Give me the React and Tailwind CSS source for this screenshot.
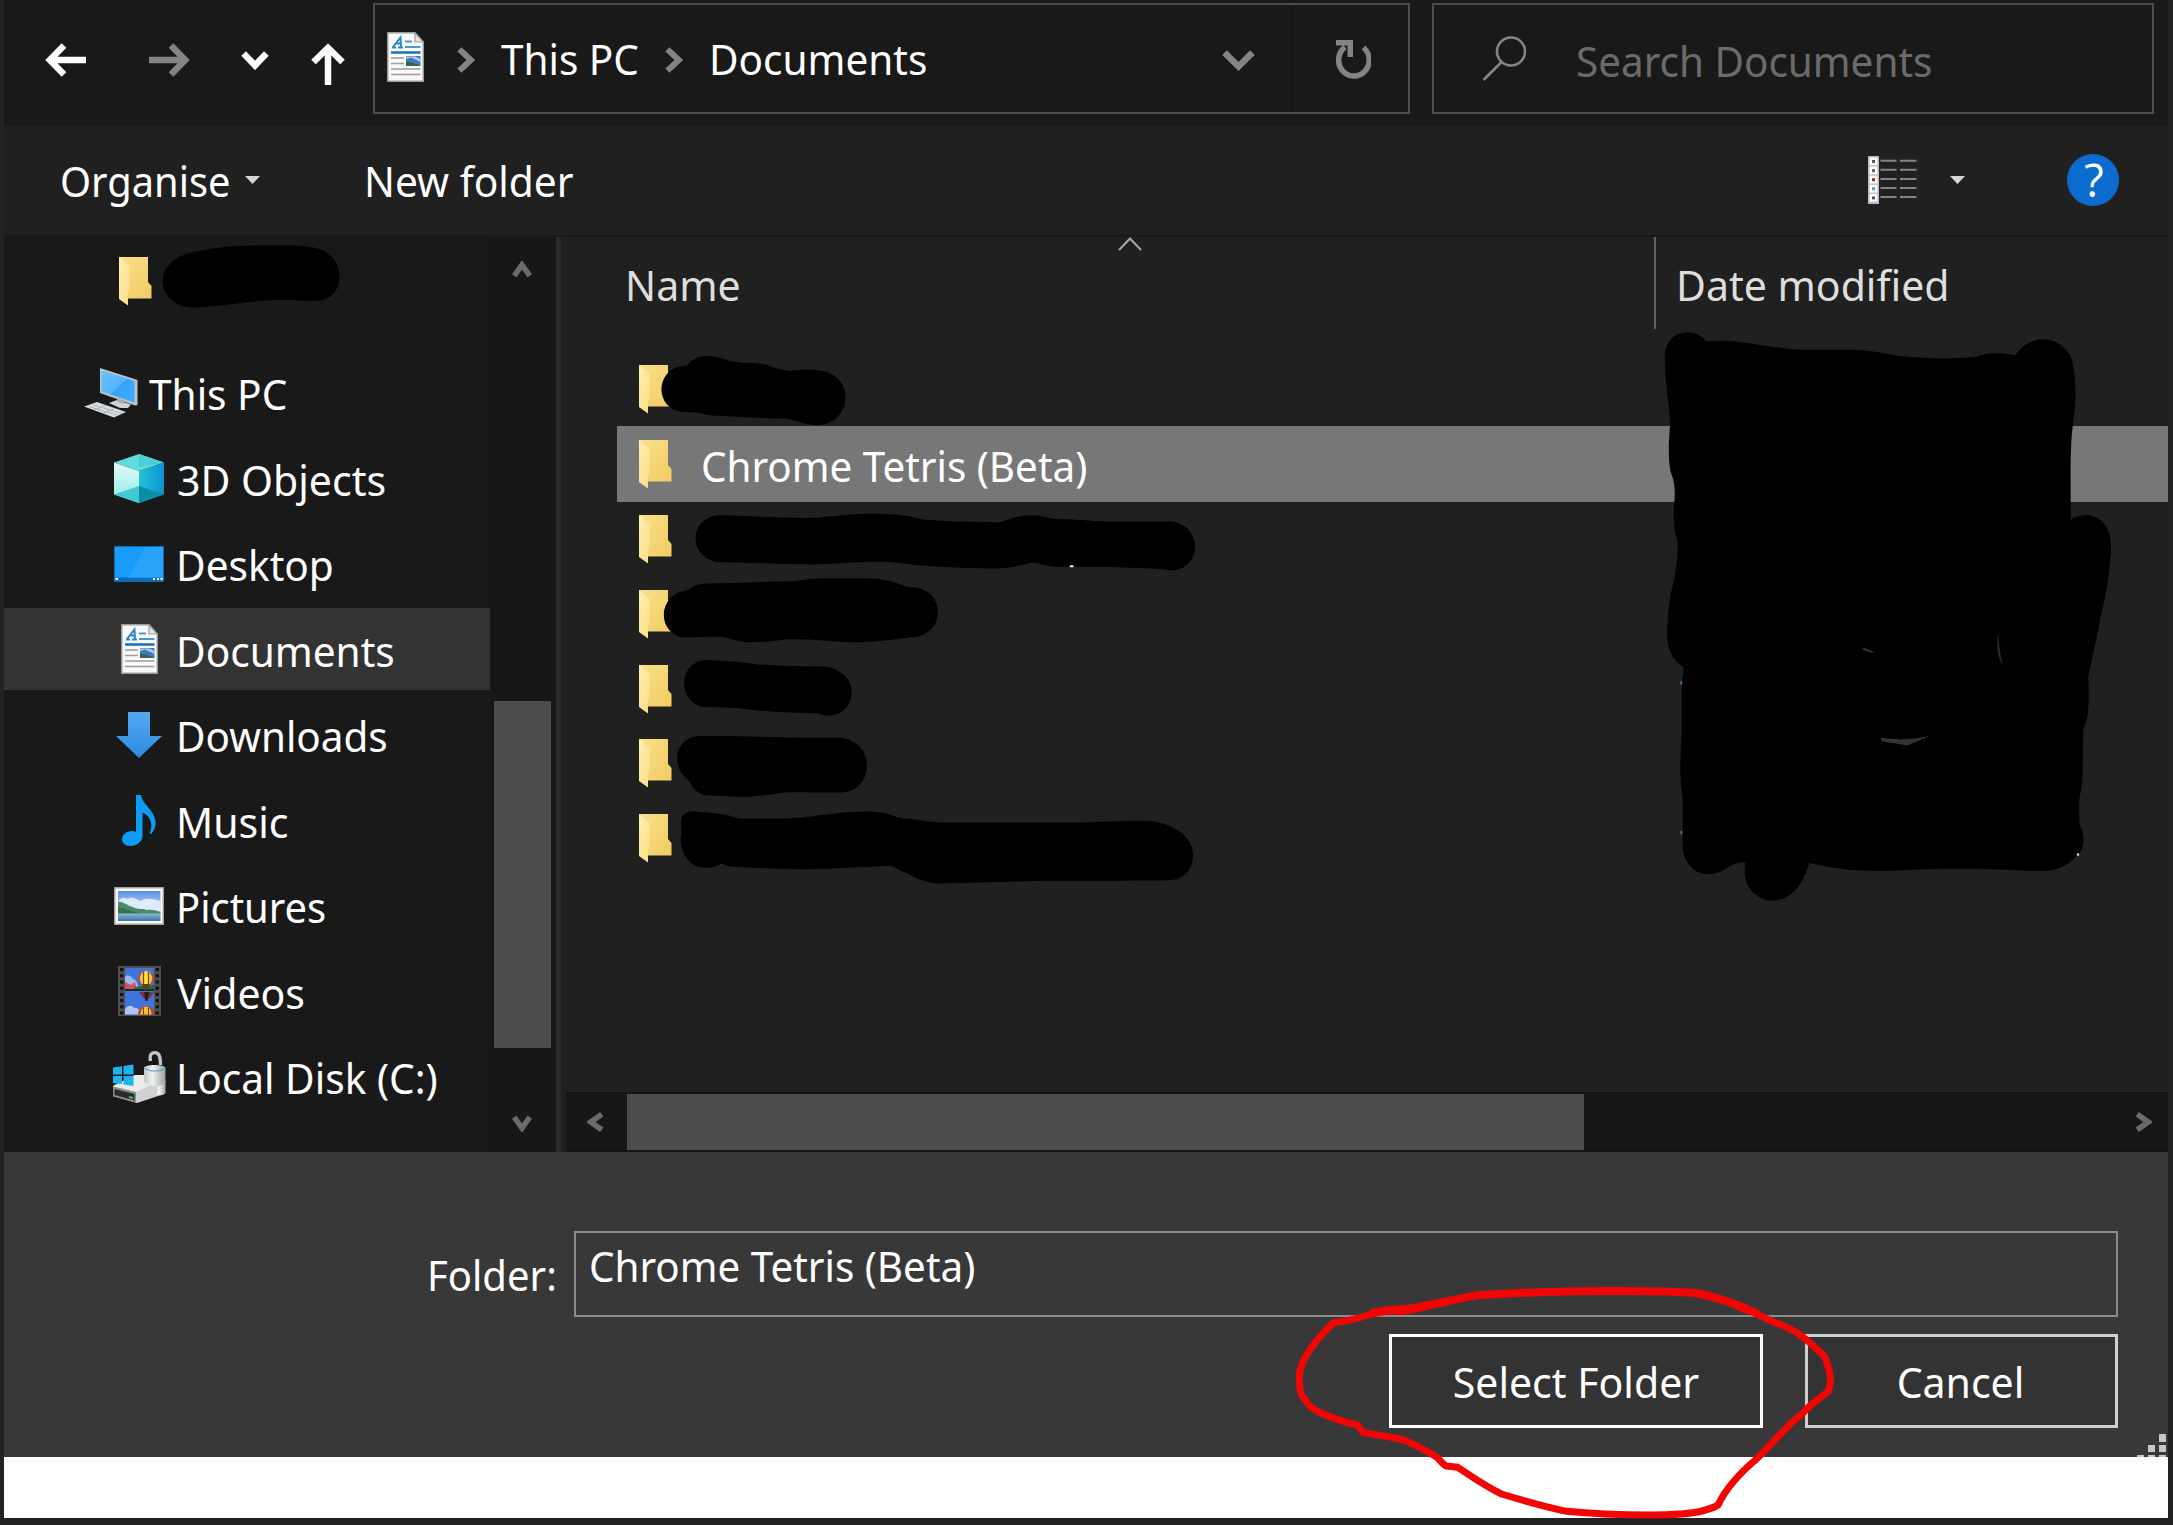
import React from "react";

function T({ children, className = "" }) {
  return <span className={"inline-block origin-left whitespace-pre " + className}>{children}</span>;
}

function FolderIcon({ className = "" }) {
  return (
    <svg width="33" height="49" viewBox="0 0 33 49" className={className}>
      <defs>
        <linearGradient id="fback" x1="0" x2="1" y1="0" y2="1">
          <stop offset="0" stopColor="#fbe08a" />
          <stop offset="1" stopColor="#f0cc62" />
        </linearGradient>
        <linearGradient id="ffront" x1="0" x2="1" y1="0" y2="1">
          <stop offset="0" stopColor="#fff0b4" />
          <stop offset="1" stopColor="#fbdc84" />
        </linearGradient>
      </defs>
      <path d="M0 0H29V25L32.500 29V41.500H0Z" fill="url(#fback)" />
      <path d="M0 0L10.500 8.500V34L9 36V48.500L0 42Z" fill="url(#ffront)" />
    </svg>
  );
}

function DocIcon() {
  return (
    <svg width="37" height="50" viewBox="0 0 37 50">
      <path d="M.75 .75H28L36.250 10V49.250H.75Z" fill="#fafafa" stroke="#9b9b9b" strokeWidth="1.500" />
      <path d="M28 .75V10H36.250Z" fill="#e4e4e4" stroke="#9b9b9b" strokeWidth="1.200" />
      <path d="M5 15.500H9M11 15.500H16M6 15L13.500 5.500L14 15.500M8.500 11.500H13.500" stroke="#2b86c8" strokeWidth="2" fill="none" />
      <path d="M18 9.500H25M18 15H33.500" stroke="#4a9ad2" strokeWidth="1.800" />
      <path d="M4 20.500H33.500" stroke="#1f74b8" strokeWidth="2.600" />
      <path d="M4 26H17M4 31.500H17M4 37H33.500M4 42.500H33.500" stroke="#9c9c9c" strokeWidth="1.700" />
      <rect x="19" y="24" width="14.500" height="10" fill="#3d7bc0" />
      <path d="M19 27L24 25.500L33.500 30V27L28 24.500H19Z" fill="#a9cdec" />
      <path d="M19 29.500L25 30.500L33.500 34H19Z" fill="#3b5f52" />
    </svg>
  );
}

function PcIcon() {
  return (
    <svg width="54" height="50" viewBox="0 0 54 50">
      <defs>
        <linearGradient id="pc" x1="0" x2="1" y1="0" y2="1">
          <stop offset="0" stopColor="#6cc0ff" />
          <stop offset=".5" stopColor="#56b4fb" />
          <stop offset=".52" stopColor="#35a4fa" />
          <stop offset="1" stopColor="#3fabfb" />
        </linearGradient>
      </defs>
      <path d="M16 0L53.500 12V37L51 37.500L16 25Z" fill="#b9c4cc" />
      <path d="M17.500 2.500L50.500 13V34.500L17.500 23.500Z" fill="url(#pc)" />
      <path d="M25 35L33 32L47 36.500L44 40L36 40Z" fill="#cfd4d8" />
      <path d="M33 30L40 32V36L33 34Z" fill="#a9b0b5" />
      <path d="M0 38.500L13 34L42 44L30 49.500Z" fill="#d9dcde" />
      <path d="M5 38.500L34 47.500M9 37L38 45.500M10 42L22 37.500M19 45L31 40.500" stroke="#b4b8bb" strokeWidth="1" />
    </svg>
  );
}

function CubeIcon() {
  return (
    <svg width="50" height="49" viewBox="0 0 50 49">
      <defs>
        <linearGradient id="cl" x1="0" x2="0" y1="0" y2="1">
          <stop offset="0" stopColor="#e2fbf8" />
          <stop offset="1" stopColor="#8ee8e6" />
        </linearGradient>
        <linearGradient id="cr" x1="0" x2="1" y1="0" y2="0">
          <stop offset="0" stopColor="#22c3d6" />
          <stop offset="1" stopColor="#0c93d2" />
        </linearGradient>
      </defs>
      <path d="M25 0L50 8.500L25 17L0 8.500Z" fill="#5fdcdb" />
      <path d="M25 0L50 8.500L25 13Z" fill="#4ccfd2" />
      <path d="M0 8.500L25 17V49L0 40.500Z" fill="url(#cl)" />
      <path d="M50 8.500L25 17V49L50 40.500Z" fill="url(#cr)" />
      <path d="M0 40.500L25 32V49Z" fill="#3dccd4" />
      <path d="M50 40.500L25 32V49Z" fill="#0e8ba6" />
    </svg>
  );
}

function DesktopIcon() {
  return (
    <svg width="50" height="36" viewBox="0 0 50 36">
      <rect width="50" height="36" fill="#0b6cb8" />
      <rect x="1" y="1" width="48" height="30.500" fill="#189bfa" />
      <path d="M32 1H49V31.500H14Z" fill="#28a3fb" />
      <rect x="1.500" y="32" width="2.500" height="2" fill="#fff" />
      <path d="M39 33H41M43 33H45M46.500 33H48.500" stroke="#fff" strokeWidth="2" />
    </svg>
  );
}

function DownloadIcon() {
  return (
    <svg width="46" height="46" viewBox="0 0 46 46">
      <defs>
        <linearGradient id="dl" x1="0" x2="0" y1="0" y2="1">
          <stop offset="0" stopColor="#55a9f0" />
          <stop offset="1" stopColor="#2a8ae2" />
        </linearGradient>
      </defs>
      <path d="M12 0H34V24H46L23 46L0 24H12Z" fill="url(#dl)" />
    </svg>
  );
}

function MusicIcon() {
  return (
    <svg width="34" height="51" viewBox="0 0 34 51">
      <path
        d="M14 0H19C20 9 32 15 33.500 26C34 32 32 36 29 39C27 39 28 37.500 28.500 36C31 28 28 21 20.500 17.500V41C20.500 47 14 51 8.500 51C3 51 0 48 0 44.500C0 39.500 5 36 10 36C11.500 36 13 36.300 14 37Z"
        fill="#0c9cf6"
      />
    </svg>
  );
}

function PictureIcon() {
  return (
    <svg width="50" height="38" viewBox="0 0 50 38">
      <defs>
        <linearGradient id="sky" x1="0" x2="0" y1="0" y2="1">
          <stop offset="0" stopColor="#5c92e4" />
          <stop offset="1" stopColor="#cfe6fa" />
        </linearGradient>
        <linearGradient id="sea" x1="0" x2="0" y1="0" y2="1">
          <stop offset="0" stopColor="#8fb8d4" />
          <stop offset="1" stopColor="#3a74aa" />
        </linearGradient>
      </defs>
      <rect width="50" height="38" fill="#a3a3a3" />
      <rect x="1.500" y="1.500" width="47" height="35" fill="#fff" />
      <rect x="4" y="4" width="42.500" height="23" fill="url(#sky)" />
      <path d="M5 14C7 10 11 11 14 12C18 8 23 13 27 14C32 10 40 12 46.500 14V24H4Z" fill="#dcecfa" />
      <path d="M4 15C9 14 13 19 19 20C24 23 29 21 33 23C39 22 43 24 46.500 25V27.500H4Z" fill="#4d8a68" />
      <path d="M4 20C12 22 20 25 30 27.500H4Z" fill="#37714f" />
      <rect x="4" y="26.500" width="42.500" height="7.500" fill="url(#sea)" />
    </svg>
  );
}

function VideoIcon() {
  const holes = [2, 8.2, 14.4, 20.6, 26.8, 33, 39.2, 45.4];
  return (
    <svg width="43" height="50" viewBox="0 0 43 50">
      <rect width="43" height="50" fill="#4f4f4f" />
      {holes.map((y) => (
        <g key={y} fill="#141414">
          <rect x="2" y={y} width="3.500" height="3.200" />
          <rect x="37.500" y={y} width="3.500" height="3.200" />
        </g>
      ))}
      <rect x="7" y="2" width="29" height="46.500" fill="#3f74dc" />
      <path d="M7 11C10 8 13 10 15 13C17 13 19 16 20 19V24H7Z" fill="#9fb8ea" />
      <path d="M7 16L13 19L17 16L19 24H7Z" fill="#d84a6a" />
      <path d="M17 21L36 19V24H15Z" fill="#2c6b33" />
      <rect x="7" y="23" width="29" height="2" fill="#1c2a1e" />
      <ellipse cx="28" cy="12.500" rx="8" ry="7.500" fill="#b8452c" />
      <ellipse cx="28" cy="12.500" rx="6.300" ry="7.500" fill="#f2c02c" />
      <path d="M25.500 6V18M30.500 6V18" stroke="#6d3d16" strokeWidth="1" />
      <ellipse cx="28" cy="12.500" rx="1.300" ry="7.500" fill="#ffe34a" />
      <path d="M24 18L32 18L29.500 24H26.500Z" fill="#54401b" />
      <path d="M21 26H36L31 33H26Z" fill="#74314c" />
      <path d="M26 26H31L29.500 35H27.500Z" fill="#2a1c18" />
      <path d="M7 43C10 39 14 39 16 42C20 41 22 45 23 48.500H7Z" fill="#b3c6ef" />
      <path d="M20 48.500C20 37 36 37 36 48.500Z" fill="#b8452c" />
      <path d="M22.500 48.500C22.500 38 33.500 38 33.500 48.500Z" fill="#f2c02c" />
      <path d="M25.500 48.500V42M30.500 48.500V42" stroke="#6d3d16" strokeWidth="1" />
    </svg>
  );
}

function DiskIcon() {
  return (
    <svg width="53" height="52" viewBox="0 0 53 52">
      <defs>
        <linearGradient id="lk" x1="0" x2="1" y1="0" y2="0">
          <stop offset="0" stopColor="#c3c7ca" />
          <stop offset=".4" stopColor="#f2f2f2" />
          <stop offset="1" stopColor="#9aa0a4" />
        </linearGradient>
      </defs>
      <path d="M0 35L22 24H34L44 31L51 33V43L24 52L0 45Z" fill="#cfd1d2" />
      <path d="M0 35L22 24H34L44 31L23 41Z" fill="#eaebeb" />
      <path d="M0 35.500L23 41V51.500L0 45.500Z" fill="#8b8e90" />
      <path d="M1.500 38L21.500 43V49.500L1.500 44Z" fill="#2a2b2b" />
      <path d="M16 46L20 47" stroke="#4cc04c" strokeWidth="2" />
      <path d="M0 16.500L9 15.200V23.500H0ZM10.500 15L20.500 13.500V23.500H10.500ZM0 25H9V33.200L0 32ZM10.500 25H20.500V35L10.500 33.500Z" fill="#1cb4ee" />
      <path d="M37.500 10C36 3 39 1.700 42 1.700C46 1.700 47.500 5 47.500 14" fill="none" stroke="#c4c7c9" strokeWidth="3.200" />
      <path d="M42 30H52.500V42C50 45 45 45 42 42Z" fill="url(#lk)" />
      <path d="M31 17C31 13 52.500 13 52.500 17V32C48 36 36 36 31 31Z" fill="url(#lk)" />
      <path d="M31.500 17C36 21 48 21 52 17" fill="none" stroke="#6fa2c4" strokeWidth="1.200" />
    </svg>
  );
}

function Chevron({ dir, w, h, sw, className = "" }) {
  const d = {
    right: `M${sw * 0.4} ${sw * 0.4}L${w - sw * 0.7} ${h / 2}L${sw * 0.4} ${h - sw * 0.4}`,
    left: `M${w - sw * 0.4} ${sw * 0.4}L${sw * 0.7} ${h / 2}L${w - sw * 0.4} ${h - sw * 0.4}`,
    down: `M${sw * 0.4} ${sw * 0.4}L${w / 2} ${h - sw * 0.7}L${w - sw * 0.4} ${sw * 0.4}`,
    up: `M${sw * 0.4} ${h - sw * 0.4}L${w / 2} ${sw * 0.7}L${w - sw * 0.4} ${h - sw * 0.4}`,
  }[dir];
  return (
    <svg width={w} height={h} viewBox={`0 0 ${w} ${h}`} className={className}>
      <path d={d} fill="none" stroke="currentColor" strokeWidth={sw} />
    </svg>
  );
}

function Caret() {
  return (
    <svg width="15" height="8" viewBox="0 0 15 8">
      <path d="M0 0H15L7.500 8Z" fill="#d6d6d6" />
    </svg>
  );
}

function AddressBar() {
  return (
    <header className="flex h-[126px] bg-[#191919] pt-[3px]">
      <div className="flex h-[114px] w-[369px] items-center pl-[41px]">
        <svg width="41" height="34" viewBox="0 0 41 34">
          <path d="M19 2.500L4.800 17L19 31.500M5 17H41" fill="none" stroke="#fff" strokeWidth="6.500" />
        </svg>
        <svg width="41" height="34" viewBox="0 0 41 34" className="ml-[63px]">
          <path d="M22 2.500L36.200 17L22 31.500M36 17H0" fill="none" stroke="#848484" strokeWidth="6.500" />
        </svg>
        <Chevron dir="down" w={28} h={19} sw={6.5} className="ml-[51px] text-white" />
        <svg width="34" height="42" viewBox="0 0 34 42" className="ml-[42px] mt-[7px]">
          <path d="M2.500 19L17 4.800L31.500 19M17 5V42" fill="none" stroke="#fff" strokeWidth="6.500" />
        </svg>
      </div>
      <div className="flex h-[111px] w-[1037px] items-center border-2 border-[#4d4d4d] pl-[12px]">
        <div className="mt-[-4px]">
          <DocIcon />
        </div>
        <Chevron dir="right" w={18} h={26} sw={6} className="ml-[33px] mt-[2px] text-[#848484]" />
        <div className="ml-[26px] w-[138px]">
          <T className="scale-x-[.987]">This PC</T>
        </div>
        <Chevron dir="right" w={18} h={26} sw={6} className="ml-[26px] mt-[2px] text-[#848484]" />
        <div className="ml-[26px] w-[513px]">
          <T className="scale-x-[.988]">Documents</T>
        </div>
        <Chevron dir="down" w={33} h={21} sw={6.5} className="mt-[4px] text-[#848484]" />
        <div className="ml-[36px] h-full w-px bg-[#141414]" />
        <svg width="36" height="39" viewBox="0 0 36 39" className="ml-[43px] mt-[2px]">
          <path d="M28.500 7.500A15.300 16 0 1 1 10 7" fill="none" stroke="#848484" strokeWidth="5.500" />
          <path d="M1 0H18V17H12.500V5.500H1Z" fill="#848484" />
        </svg>
      </div>
      <div className="ml-[22px] flex h-[111px] w-[722px] items-center border-2 border-[#4d4d4d] pl-[48px]">
        <svg width="46" height="45" viewBox="0 0 46 45">
          <circle cx="29" cy="15.500" r="14" fill="none" stroke="#858585" strokeWidth="2.600" />
          <path d="M19.500 26L1.500 44" stroke="#858585" strokeWidth="2.600" />
        </svg>
        <div className="ml-[48px] mt-[4px] text-[#6b6b6b]">
          <T className="scale-x-[.986]">Search Documents</T>
        </div>
      </div>
    </header>
  );
}

function Toolbar() {
  return (
    <div className="flex h-[109px] items-center bg-[#202020] pb-[2px] pl-[56px]">
      <div className="w-[185px] pt-[3px]">
        <T className="scale-x-[.972]">Organise</T>
      </div>
      <Caret />
      <div className="ml-[104px] w-[1504px] pt-[3px]">
        <T className="scale-x-[.993]">New folder</T>
      </div>
      <svg width="49" height="48" viewBox="0 0 49 48">
        <rect width="11" height="48" fill="#b9b9b9" />
        {[1.5, 10.6, 19.7, 28.8, 37.9].map((y, i) => (
          <g key={y}>
            <rect x="1.500" y={y} width="8" height="7.800" fill="#fff" />
            <rect x="4" y={y + 2.5} width="3" height="3" fill={["#4a5a6a", "#5a6a3a", "#b02020", "#5aa0a0", "#4a4a9a"][i]} />
            <path d={`M12.500 ${y + 3.2}H28.500M32 ${y + 3.2}H48.500`} stroke="#848484" strokeWidth="2" />
          </g>
        ))}
      </svg>
      <div className="ml-[33px]">
        <Caret />
      </div>
      <div className="ml-[102px] flex size-[52px] items-center justify-center rounded-full bg-[#0a6ccf] pl-[2px] font-['Open_Sans',sans-serif] text-[45px] text-white">
        ?
      </div>
    </div>
  );
}

function NavRow({ icon, label, selected, root, scale = "scale-x-[.99]", nudge = "pl-[2px]" }) {
  return (
    <li className="flex h-[85.5px] items-center">
      <div className={"flex h-[82px] w-[486px] items-center " + (selected ? "bg-[#333333]" : "")}>
        <div className={"flex shrink-0 justify-center " + (root ? "ml-[80px] w-[54px]" : "ml-[108px] w-[54px]")}>{icon}</div>
        <div className={"pt-[3px] " + nudge + (root ? " ml-[9px]" : " ml-[8px]")}>
          <T className={scale}>{label}</T>
        </div>
      </div>
    </li>
  );
}

function Sidebar() {
  return (
    <nav className="flex w-[552px] bg-[#191919]">
      <ul className="w-[486px] pt-[2px]">
        <li className="mb-[25.5px] flex h-[85.5px] items-center pl-[115px]">
          <FolderIcon />
        </li>
        <NavRow root icon={<PcIcon />} label="This PC" />
        <NavRow icon={<CubeIcon />} label="3D Objects" scale="" nudge="pl-[3px]" />
        <NavRow icon={<DesktopIcon />} label="Desktop" />
        <NavRow selected icon={<DocIcon />} label="Documents" />
        <NavRow icon={<DownloadIcon />} label="Downloads" scale="scale-x-[.986]" />
        <NavRow icon={<MusicIcon />} label="Music" scale="" />
        <NavRow icon={<PictureIcon />} label="Pictures" scale="scale-x-[.975]" />
        <NavRow icon={<VideoIcon />} label="Videos" scale="" nudge="pl-[3px]" />
        <NavRow icon={<DiskIcon />} label="Local Disk (C:)" />
      </ul>
      <div className="flex w-[66px] flex-col items-center bg-[#171717] pt-[24px] pr-[2px] text-[#6b6b6b]">
        <Chevron dir="up" w={20} h={17} sw={5.5} />
        <div className="mt-[423px] h-[347px] w-[57px] bg-[#4d4d4d]" />
        <Chevron dir="down" w={20} h={17} sw={5.5} className="mt-[67px]" />
      </div>
    </nav>
  );
}

function FileList() {
  return (
    <main className="flex w-[1607px] flex-col bg-[#202020]">
      <div className="flex h-[107px]">
        <div className="flex h-[92px] w-[1095px] border-r-2 border-[#636363]">
          <div className="w-[557px] pl-[64px] pt-[20px] text-[#dedede]">
            <T>Name</T>
          </div>
          <svg width="24" height="14" viewBox="0 0 24 14">
            <path d="M1 13L12 1.500L23 13" fill="none" stroke="#a8a8a8" strokeWidth="2" />
          </svg>
        </div>
        <div className="pl-[20px] pt-[20px] text-[#dedede]">
          <T>Date modified</T>
        </div>
      </div>
      <ul className="ml-[56px] mt-[7.2px] flex-1">
        {[0, 1, 2, 3, 4, 5, 6].map((i) => (
          <li key={i} className="h-[74.8px]">
            <div className={"flex h-[76.5px] items-center pl-[22px] " + (i === 1 ? "bg-[#777777]" : "")}>
              <FolderIcon className="mt-[1px]" />
              {i === 1 && (
                <div className="ml-[29px] pt-[4px]">
                  <T className="scale-x-[.985]">Chrome Tetris (Beta)</T>
                </div>
              )}
            </div>
          </li>
        ))}
      </ul>
      <div className="ml-[5px] flex h-[60px] items-center border-y-2 border-[#131313] bg-[#171717] pl-[21px] text-[#6b6b6b]">
        <Chevron dir="left" w={17} h={20} sw={5.5} />
        <div className="ml-[23px] h-full w-[957px] bg-[#4d4d4d]" />
        <Chevron dir="right" w={17} h={20} sw={5.5} className="ml-[551px]" />
      </div>
    </main>
  );
}

function Footer() {
  return (
    <footer className="h-[305px] bg-[#383838] pt-[79px]">
      <div className="flex h-[86px]">
        <div className="w-[569.5px] pl-[423px] pt-[16px]">
          <T className="scale-x-[.977]">Folder:</T>
        </div>
        <div className="w-[1544.5px] border-2 border-[#8c8c8c] pl-[13px] pt-[5px]">
          <T className="scale-x-[.985]">Chrome Tetris (Beta)</T>
        </div>
      </div>
      <div className="mt-[17px] flex justify-end pr-[50px]">
        <button className="mr-[42px] h-[93.5px] w-[374px] border-[3px] border-white bg-[#333333] pt-[3px]">
          <T>Select Folder</T>
        </button>
        <button className="h-[93.5px] w-[313px] border-[3px] border-[#cfcfcf] bg-[#333333] pr-[2px] pt-[3px]">
          <T>Cancel</T>
        </button>
      </div>
      <div className="mt-[6.5px] flex flex-col items-end gap-[3px] pr-[2px]">
        {[1, 2, 3].map((n) => (
          <div key={n} className="flex gap-[4px]">
            {Array.from({ length: n }, (_, i) => (
              <span key={i} className={"w-[7px] bg-[#c6c6c6] " + (n === 3 ? "h-[2px]" : "h-[7.5px]")} />
            ))}
          </div>
        ))}
      </div>
    </footer>
  );
}

function Markup() {
  return (
    <svg className="pointer-events-none absolute left-0 top-0" width="2173" height="1525" viewBox="0 0 2173 1525">
      <path d="M190 253C212 247 240 245 272 245.500C300 245 315 246 324 251C345 262 343 290 328 298C315 304 300 299 272 300C240 302 215 308 190 307.500C155 303 152 262 190 253Z" fill="#000" />
      <g transform="translate(560 340) scale(.42092 .35714)" fill="#000">
        <path d="M300 72C320 50 335 42 360 46C385 48 395 56 410 60C440 66 475 62 492 70C510 78 525 82 545 87C575 80 610 82 630 88C665 102 680 130 678 165C676 205 650 240 605 238C575 236 560 224 535 220C480 220 420 214 370 212C345 211 335 204 320 203C290 203 270 200 258 185C235 160 236 115 258 90C270 76 285 74 300 72Z" />
        <path d="M372 491C440 492 560 500 610 498C680 490 700 486 770 487C830 488 840 500 870 503C930 508 990 510 1045 510C1075 500 1090 490 1125 491C1155 492 1160 502 1185 502C1240 502 1260 508 1300 508H1455C1490 514 1508 545 1509 578C1508 615 1485 645 1455 645C1400 638 1350 638 1290 635H1180C1150 634 1140 622 1120 624C1095 630 1075 640 1015 640C960 640 900 634 850 631C815 626 800 620 740 621C680 622 650 630 580 628C500 627 440 622 372 622C305 605 305 505 372 491Z" />
        <path d="M305 700C325 680 340 682 380 681C450 679 520 676 560 675C600 665 640 667 700 667C770 666 790 674 825 692C870 690 898 720 898 762C897 800 875 830 835 832C790 840 740 846 690 846C640 844 590 836 540 838C500 844 490 846 440 846C410 842 405 834 380 831C350 830 320 834 290 832C230 820 230 710 305 700Z" />
        <path d="M345 896C380 897 420 900 460 907C510 912 560 914 625 914C670 920 693 950 693 985C693 1025 670 1052 635 1052C620 1050 620 1045 605 1045C550 1044 480 1040 430 1032C400 1028 370 1029 335 1026C280 1010 280 905 345 896Z" />
        <path d="M330 1109C420 1108 500 1112 560 1114H665C705 1118 729 1150 729 1190C729 1235 705 1265 670 1267C620 1268 570 1265 535 1267C490 1274 460 1280 430 1279L345 1275C320 1268 315 1250 305 1232C285 1215 276 1190 279 1160C283 1130 305 1110 330 1109Z" />
        <path d="M290 1335C295 1322 310 1318 330 1321C370 1325 390 1326 425 1340H520C580 1340 600 1332 640 1328C690 1320 740 1318 770 1324C790 1330 800 1338 815 1340C850 1342 870 1350 910 1351H1240C1300 1350 1340 1344 1400 1347C1450 1352 1504 1385 1504 1442C1504 1485 1480 1512 1445 1513C1350 1515 1250 1514 1130 1515L905 1522C860 1522 840 1500 785 1472C720 1475 650 1481 580 1482C500 1480 440 1478 410 1475C395 1472 388 1468 383 1465C370 1480 340 1480 325 1474C300 1460 284 1425 287 1390C292 1370 284 1350 290 1335Z" />
        <rect x="1211" y="631" width="9" height="5" rx="1" fill="#e6e6e6" />
      </g>
      <g transform="translate(1600 320) scale(.36543 .38265)" fill="#000">
        <path d="M177 95C178 55 205 32 240 32C265 32 280 45 292 56C350 50 400 60 450 67C500 72 520 78 560 78H690C740 78 770 88 830 95C900 102 970 102 1025 97C1060 86 1090 84 1137 92C1155 65 1185 50 1215 50C1260 52 1290 85 1294 115C1302 160 1304 200 1297 250C1290 300 1288 330 1288 420V522C1320 502 1355 508 1375 528C1398 552 1400 580 1398 610C1392 680 1385 720 1370 775C1358 840 1345 890 1336 935C1338 970 1338 1000 1336 1020C1334 1050 1325 1055 1323 1070C1320 1120 1324 1190 1316 1230C1308 1260 1312 1290 1313 1320C1325 1340 1327 1370 1316 1388C1290 1420 1260 1438 1220 1440C1150 1440 1070 1433 980 1434C860 1434 850 1440 760 1439C670 1440 630 1430 573 1419C565 1445 550 1475 535 1490C515 1508 495 1517 470 1517C425 1515 395 1480 396 1440L397 1417C375 1418 362 1422 345 1433C325 1446 310 1449 290 1448C255 1445 228 1415 226 1375V1245C218 1200 218 1150 224 1080V950L229 908C200 890 185 860 184 830C184 780 188 730 200 690C208 655 214 620 212 575C202 555 200 520 203 480C208 430 200 415 193 395C184 350 190 300 192 270C190 220 177 160 177 95Z" />
        <path d="M718 855L752 868L740 869L720 862Z" fill="#333" />
        <path d="M1089 815C1093 850 1094 870 1102 902C1088 885 1085 860 1089 815Z" fill="#282828" />
        <path d="M768 1092C810 1097 850 1098 900 1087C880 1095 860 1105 842 1112C820 1108 790 1104 770 1100Z" fill="#333" />
        <rect x="220" y="944" width="5" height="9" fill="#2d78b8" />
        <rect x="220" y="1335" width="5" height="9" fill="#2d78b8" />
        <rect x="1305" y="1394" width="6" height="6" fill="#ddd" />
      </g>
      <g transform="translate(1270 1220) scale(.5759 .33333)" fill="none" stroke="#f20505" strokeLinejoin="round" strokeLinecap="round">
        <path
          vectorEffect="non-scaling-stroke"
          strokeWidth="7"
          d="M268 262L230 275C210 270 190 275 165 288C145 300 125 305 110 308C85 350 60 400 52 450C50 480 50 500 54 522C62 545 70 560 76 568C100 590 125 605 152 615L162 638C190 646 210 650 232 660C260 680 275 695 290 712C298 725 300 733 306 738L326 742C350 770 375 800 402 822C440 842 480 862 515 874C560 882 610 885 660 885C700 885 730 882 750 873C765 866 772 862 778 855C790 810 815 760 846 715C870 675 895 620 925 580C940 548 955 535 969 515C974 495 974 480 972 460C968 430 966 420 962 408C945 380 930 350 905 328C885 312 865 300 850 286C840 275 832 272 822 268C800 245 775 232 740 219"
        />
        <path vectorEffect="non-scaling-stroke" strokeWidth="8" d="M180 278C215 265 240 270 265 258C300 250 325 235 360 226C420 220 500 213 580 213C650 212 700 214 740 219C775 232 800 245 845 280" />
      </g>
    </svg>
  );
}

export default function App() {
  return (
    <div className="relative h-[1525px] w-[2173px] overflow-hidden bg-[#222222] pl-[4px] pr-[5px] font-['Noto_Sans',sans-serif] text-[41px] leading-[56px] text-white">
      <AddressBar />
      <Toolbar />
      <div className="flex h-[917px] border-t-2 border-[#191919]">
        <Sidebar />
        <div className="w-[5px] bg-[#2b2b2b]" />
        <FileList />
      </div>
      <Footer />
      <div className="h-[60.5px] bg-white" />
      <Markup />
    </div>
  );
}
